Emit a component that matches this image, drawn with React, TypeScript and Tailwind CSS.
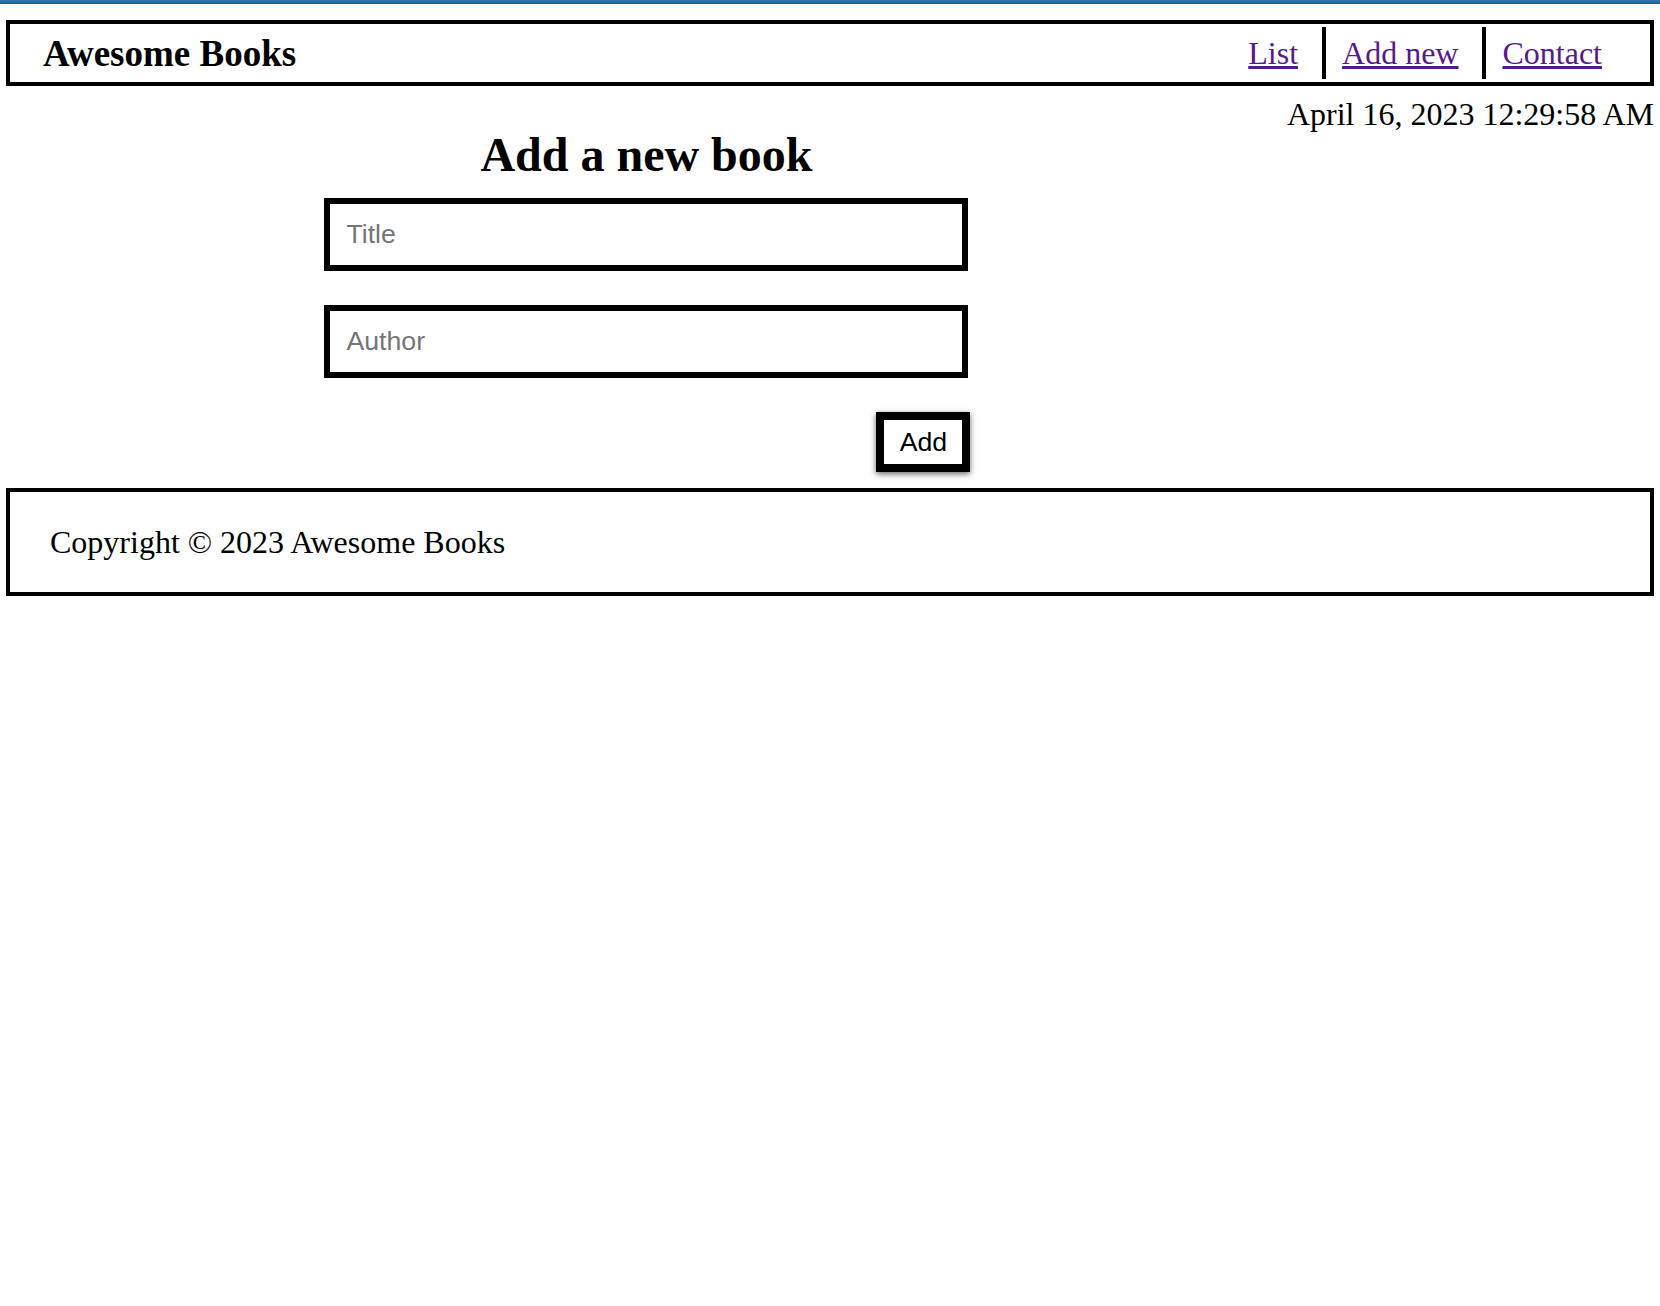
export default function App() {
  return (
    <div className="min-h-[1306px] bg-white font-['Liberation_Serif',serif] text-black">
      <div className="h-[4px] bg-gradient-to-b from-[#3a74b4] to-[#1f5a9c]" />
      <div className="px-[6px]">
        <header className="mt-[16px] flex h-[66px] items-center justify-between border-4 border-black pl-[33px]">
          <h1 className="text-[37px] font-bold leading-none">Awesome Books</h1>
          <ul className="mr-[32px] flex items-center gap-[8px] text-[32px] leading-none">
            <li className="flex h-[52px] items-center px-[16px]">
              <a href="#list" className="text-[#551a8b] underline">
                List
              </a>
            </li>
            <li className="flex h-[52px] items-center border-l-4 border-black px-[16px]">
              <a href="#add" className="text-[#551a8b] underline">
                Add new
              </a>
            </li>
            <li className="flex h-[52px] items-center border-l-4 border-black px-[16px]">
              <a href="#contact" className="text-[#551a8b] underline">
                Contact
              </a>
            </li>
          </ul>
        </header>

        <div className="mt-[10px] flex items-start">
          <section className="flex flex-1 flex-col items-center">
            <h2 className="mt-[31px] text-[48px] font-bold leading-[55px]">Add a new book</h2>
            <form
              className="ml-[4px] mt-[16px] flex w-[648px] flex-col font-['Liberation_Sans',sans-serif] text-[26.7px]"
              onSubmit={(e) => e.preventDefault()}
            >
              <input
                type="text"
                placeholder="Title"
                className="h-[73px] w-[644px] border-[6px] border-black bg-white pl-[16px] outline-none placeholder:text-[#757575]"
              />
              <input
                type="text"
                placeholder="Author"
                className="mt-[34px] h-[73px] w-[644px] border-[6px] border-black bg-white pl-[16px] outline-none placeholder:text-[#757575]"
              />
              <button
                type="submit"
                className="mr-[2px] mt-[34px] h-[60px] w-[94px] self-end border-[8px] border-black bg-white leading-none text-black shadow-[0_2px_6px_rgba(0,0,0,0.6)]"
              >
                Add
              </button>
            </form>
          </section>
          <p className="text-[32px] leading-[36px]">April 16, 2023 12:29:58 AM</p>
        </div>

        <footer className="mt-[16px] flex h-[108px] items-center border-4 border-black pl-[40px] text-[32px]">
          <p>Copyright © 2023 Awesome Books</p>
        </footer>
      </div>
    </div>
  );
}
